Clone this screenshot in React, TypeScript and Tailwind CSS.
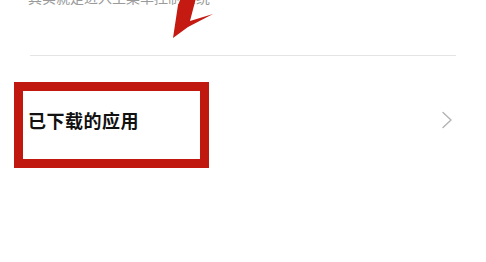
const FONT = { fontFamily: '"Noto Sans CJK SC", "Noto Sans", sans-serif' }

function Chevron() {
  return (
    <svg width="12" height="18" viewBox="0 0 12 18" className="shrink-0">
      <path d="M2 1.5 L10 9 L2 16.5" fill="none" stroke="#b3b3b3" strokeWidth="1.4" strokeLinecap="round" strokeLinejoin="round" />
    </svg>
  )
}

export default function App() {
  return (
    <div className="relative w-[486px] h-[262px] overflow-hidden bg-white" style={FONT}>
      {/* clipped hint line above */}
      <div className="-mt-[13px] pl-[28px] text-[14px] leading-[21px] text-[#9a9a9a]">
        其实就是进入主菜单控制系统
      </div>

      {/* divider */}
      <div className="mt-[47px] mx-[30px] border-t border-[#e4e4e4]" />

      {/* row */}
      <div className="flex items-center justify-between h-[128px] pl-[28px] pr-[33px]">
        <span className="text-[18px] font-bold text-[#111] tracking-[0.5px]">已下载的应用</span>
        <Chevron />
      </div>

      {/* annotation: red box */}
      <div className="absolute left-[14px] top-[82px] w-[195px] h-[86px] border-[9px] border-[#c0180f]" />

      {/* annotation: red arrow */}
      <svg className="absolute left-0 top-0" width="486" height="60" viewBox="0 0 486 60">
        <polygon points="173,38 178,5 181,-2 196,-2 190,21 213,14 188,27" fill="#c41a12" />
      </svg>
    </div>
  )
}
